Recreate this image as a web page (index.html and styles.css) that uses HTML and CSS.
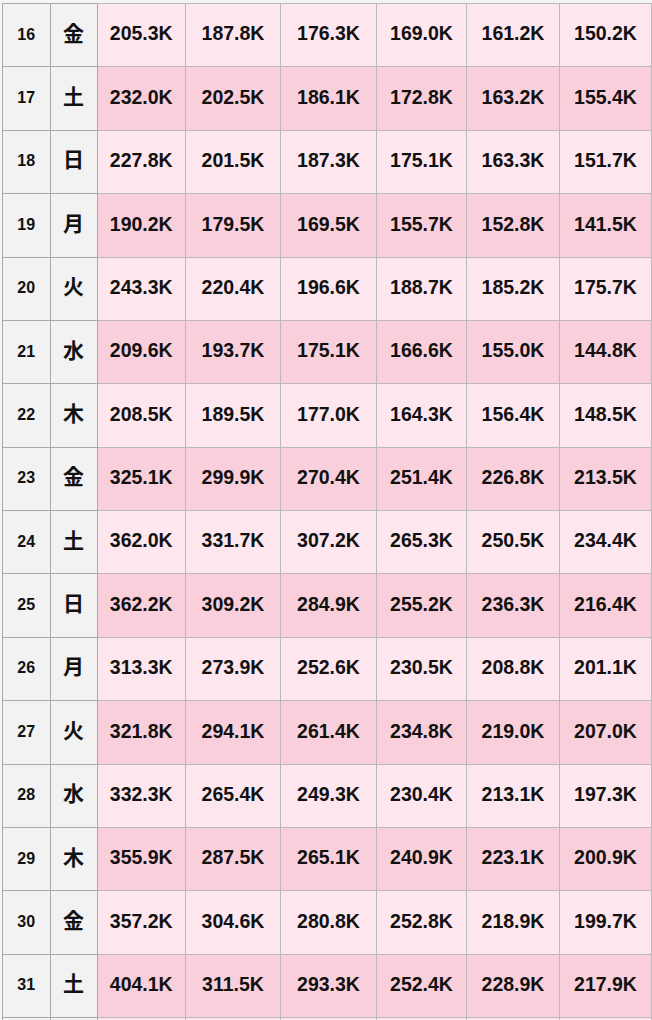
FILE: index.html
```html
<!DOCTYPE html>
<html lang="ja">
<head>
<meta charset="utf-8">
<title>Table</title>
<link rel="stylesheet" href="styles.css">
</head>
<body>
<div class="wrap">
<table class="grid">
<colgroup>
<col class="c-day"><col class="c-wd"><col class="c1"><col class="c2"><col class="c3"><col class="c4"><col class="c5"><col class="c6">
</colgroup>
<tbody>
<tr class="light"><td class="day">16</td><td class="wd">金</td><td>205.3K</td><td>187.8K</td><td>176.3K</td><td>169.0K</td><td>161.2K</td><td>150.2K</td></tr>
<tr class="dark"><td class="day">17</td><td class="wd">土</td><td>232.0K</td><td>202.5K</td><td>186.1K</td><td>172.8K</td><td>163.2K</td><td>155.4K</td></tr>
<tr class="light"><td class="day">18</td><td class="wd">日</td><td>227.8K</td><td>201.5K</td><td>187.3K</td><td>175.1K</td><td>163.3K</td><td>151.7K</td></tr>
<tr class="dark"><td class="day">19</td><td class="wd">月</td><td>190.2K</td><td>179.5K</td><td>169.5K</td><td>155.7K</td><td>152.8K</td><td>141.5K</td></tr>
<tr class="light"><td class="day">20</td><td class="wd">火</td><td>243.3K</td><td>220.4K</td><td>196.6K</td><td>188.7K</td><td>185.2K</td><td>175.7K</td></tr>
<tr class="dark"><td class="day">21</td><td class="wd">水</td><td>209.6K</td><td>193.7K</td><td>175.1K</td><td>166.6K</td><td>155.0K</td><td>144.8K</td></tr>
<tr class="light"><td class="day">22</td><td class="wd">木</td><td>208.5K</td><td>189.5K</td><td>177.0K</td><td>164.3K</td><td>156.4K</td><td>148.5K</td></tr>
<tr class="dark"><td class="day">23</td><td class="wd">金</td><td>325.1K</td><td>299.9K</td><td>270.4K</td><td>251.4K</td><td>226.8K</td><td>213.5K</td></tr>
<tr class="light"><td class="day">24</td><td class="wd">土</td><td>362.0K</td><td>331.7K</td><td>307.2K</td><td>265.3K</td><td>250.5K</td><td>234.4K</td></tr>
<tr class="dark"><td class="day">25</td><td class="wd">日</td><td>362.2K</td><td>309.2K</td><td>284.9K</td><td>255.2K</td><td>236.3K</td><td>216.4K</td></tr>
<tr class="light"><td class="day">26</td><td class="wd">月</td><td>313.3K</td><td>273.9K</td><td>252.6K</td><td>230.5K</td><td>208.8K</td><td>201.1K</td></tr>
<tr class="dark"><td class="day">27</td><td class="wd">火</td><td>321.8K</td><td>294.1K</td><td>261.4K</td><td>234.8K</td><td>219.0K</td><td>207.0K</td></tr>
<tr class="light"><td class="day">28</td><td class="wd">水</td><td>332.3K</td><td>265.4K</td><td>249.3K</td><td>230.4K</td><td>213.1K</td><td>197.3K</td></tr>
<tr class="dark"><td class="day">29</td><td class="wd">木</td><td>355.9K</td><td>287.5K</td><td>265.1K</td><td>240.9K</td><td>223.1K</td><td>200.9K</td></tr>
<tr class="light"><td class="day">30</td><td class="wd">金</td><td>357.2K</td><td>304.6K</td><td>280.8K</td><td>252.8K</td><td>218.9K</td><td>199.7K</td></tr>
<tr class="dark"><td class="day">31</td><td class="wd">土</td><td>404.1K</td><td>311.5K</td><td>293.3K</td><td>252.4K</td><td>228.9K</td><td>217.9K</td></tr>
<tr class="light"><td class="day"></td><td class="wd"></td><td></td><td></td><td></td><td></td><td></td><td></td></tr>
</tbody>
</table>
</div>
</body>
</html>
```

FILE: styles.css
```css
html, body {
  margin: 0;
  padding: 0;
  background: #f4f4f4;
}
body {
  font-family: "Liberation Sans", Arial, "Noto Sans CJK JP", sans-serif;
  color: #111;
  overflow: hidden;
  height: 1020px;
}
.wrap {
  padding: 3px 0 0 2px;
}
.grid {
  border-collapse: collapse;
  table-layout: fixed;
  width: 649px;
}
.c-day { width: 47.5px; }
.c-wd { width: 47px; }
.c1 { width: 88.5px; }
.c2 { width: 95px; }
.c3 { width: 96px; }
.c4 { width: 90px; }
.c5 { width: 93px; }
.c6 { width: 92px; }
.grid tr {
  height: 63.375px;
}
.grid td {
  border: 1px solid #b9b9b9;
  padding: 0 0 2px;
  text-align: center;
  vertical-align: middle;
  font-weight: bold;
  font-size: 19.5px;
  line-height: 1;
  white-space: nowrap;
}
.grid tr.light td { background: #fde6ee; }
.grid tr.dark td { background: #f9cfdb; }
.grid tr td.day,
.grid tr td.wd {
  background: #f2f2f2;
  border-color: #a9a9a9;
}
.grid td.day {
  font-size: 16px;
  padding-bottom: 1px;
}
.grid td.wd {
  font-family: "Noto Sans CJK JP", sans-serif;
  font-size: 21px;
  font-weight: 700;
  padding-bottom: 6px;
}
```
